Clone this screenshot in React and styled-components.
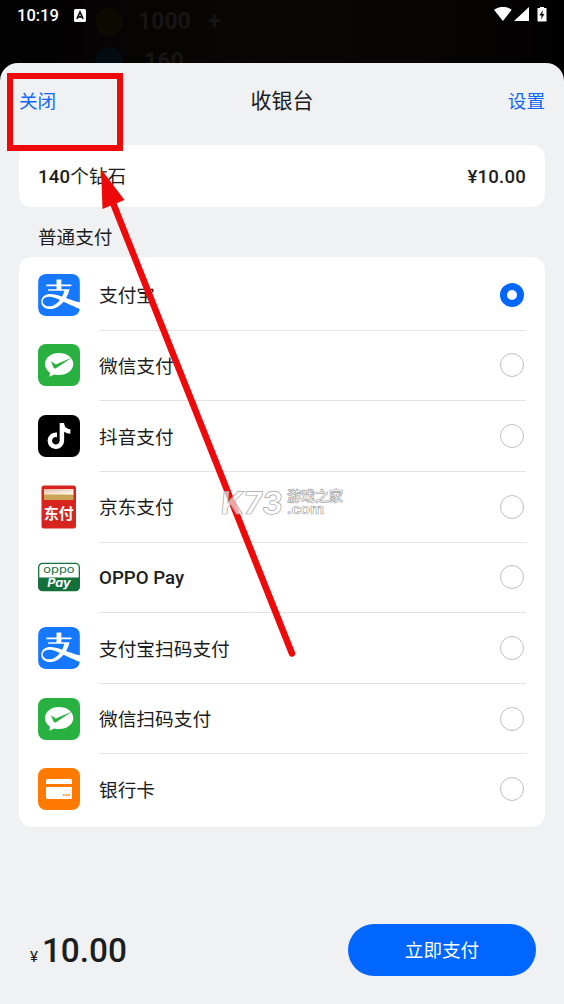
import React, { useState } from 'react';
import styled, { createGlobalStyle } from 'styled-components';
import { SiAlipay } from 'react-icons/si';
import { FaTiktok } from 'react-icons/fa';

const colors = {
  sheet: '#eff1f3',
  white: '#ffffff',
  primary: '#0066ff',
  text: '#1c1d20',
  line: '#e3e3e3',
  mark: '#ee0a0a',
};

const GlobalStyle = createGlobalStyle`
  * {
    box-sizing: border-box;
  }
  body {
    margin: 0;
    background: #040303;
    font-family: Roboto, "Noto Sans CJK SC", sans-serif;
    color: ${colors.text};
  }
`;

const Screen = styled.div`
  position: relative;
  display: flex;
  flex-direction: column;
  width: 564px;
  height: 1004px;
  overflow: hidden;
  background: linear-gradient(90deg, #020202, #0a0605 45%, #080504 75%, #020101);
`;

const TopArea = styled.div`
  position: relative;
  height: 63px;
  flex: none;
  overflow: hidden;
`;

const StatusBar = styled.div`
  position: relative;
  display: flex;
  align-items: center;
  height: 30px;
  padding: 0 16px 0 17px;
  color: ${colors.white};
`;

const Clock = styled.span`
  width: 57px;
  font-size: 16.5px;
  font-weight: 500;
`;

const StatusIcons = styled.svg`
  margin-left: auto;
`;

const Coin = styled.div`
  position: absolute;
  left: ${props => props.$x}px;
  top: ${props => props.$y}px;
  width: 28px;
  height: 28px;
  border-radius: 50%;
  background: ${props => props.$color};
`;

const CoinCount = styled.span`
  position: absolute;
  left: ${props => props.$x}px;
  top: ${props => props.$y}px;
  color: #171514;
  font-size: 23px;
  line-height: 26px;
  font-weight: 700;
`;

const Sheet = styled.div`
  display: flex;
  flex-direction: column;
  flex: 1;
  padding: 0 19px;
  border-radius: 18px 18px 0 0;
  background: ${colors.sheet};
  z-index: 1;
`;

const Header = styled.div`
  display: grid;
  grid-template-columns: 1fr auto 1fr;
  align-items: center;
  height: 82px;
  padding-bottom: 10px;
`;

const HeaderLink = styled.a`
  justify-self: ${props => (props.$end ? 'end' : 'start')};
  color: #1268f3;
  font-size: 18.6px;
`;

const Title = styled.h1`
  margin: 0;
  font-size: 21px;
  font-weight: 400;
`;

const OrderCard = styled.div`
  display: flex;
  align-items: baseline;
  justify-content: space-between;
  height: 62px;
  padding: 2px 19px 0;
  border-radius: 13px;
  background: ${colors.white};
  font-size: 18.6px;
  line-height: 61px;
  font-weight: 500;
  letter-spacing: 0.2px;
`;

const Unit = styled.span`
  font-weight: 400;
  letter-spacing: 0;
`;

const SectionLabel = styled.div`
  height: 50px;
  padding: 2px 0 0 19px;
  font-size: 18.6px;
  line-height: 58px;
`;

const MethodList = styled.div`
  height: 570px;
  padding: 3px 19px 0;
  border-radius: 13px;
  background: ${colors.white};
`;

const MethodRow = styled.div`
  display: flex;
  align-items: center;
  height: 70.65px;
  cursor: pointer;
`;

const IconCell = styled.div`
  display: flex;
  align-items: center;
  justify-content: center;
  width: 42px;
  margin: 0 19px 1px 0;
`;

const IconTile = styled.div`
  display: flex;
  align-items: center;
  justify-content: center;
  width: 42px;
  height: 42px;
  border-radius: 8px;
  overflow: hidden;
  background: ${props => props.$bg};
  color: ${props => props.$fg || colors.white};
`;

const MethodBody = styled.div`
  display: flex;
  align-items: center;
  justify-content: space-between;
  flex: 1;
  height: 100%;
  padding-right: 2px;
  border-bottom: 1px solid ${props => (props.$last ? 'transparent' : colors.line)};
  font-size: 18.7px;
`;

const MethodName = styled.span`
  font-weight: ${props => (props.$latin ? 500 : 400)};
  padding: ${props => (props.$latin ? '2px 0 0' : '0 0 2px')};
`;

const Radio = styled.span`
  width: 24px;
  height: 24px;
  border-radius: 50%;
  border: ${props => (props.$checked ? `7px solid ${colors.primary}` : '1.5px solid #bfbfbf')};
`;

const Footer = styled.div`
  display: flex;
  align-items: center;
  justify-content: space-between;
  margin-top: auto;
  height: 108px;
  padding: 0 9px 0 11px;
`;

const Total = styled.div`
  display: flex;
  align-items: baseline;
  font-size: 33.4px;
  font-weight: 500;
`;

const Currency = styled.span`
  margin-right: 4px;
  font-size: 15px;
  font-weight: 400;
`;

const PayButton = styled.button`
  width: 188px;
  height: 52px;
  padding: 0 0 3px;
  border: none;
  border-radius: 26px;
  background: ${colors.primary};
  color: ${colors.white};
  font-family: inherit;
  font-size: 18.6px;
  cursor: pointer;
`;

const Highlight = styled.div`
  position: absolute;
  left: 7px;
  top: 73px;
  width: 116px;
  height: 78px;
  border: 6px solid ${colors.mark};
  z-index: 2;
`;

const Overlay = styled.svg`
  position: absolute;
  left: 0;
  top: 0;
  pointer-events: none;
  z-index: 2;
`;

function WechatIcon() {
  return (
    <IconTile $bg="#28b140">
      <svg width="42" height="42" viewBox="0 0 42 42">
        <path d="M21 9C13 9 7 13.8 7 20c0 3.700 2 6.700 5 8.700L11.400 32.700L16.200 30.400C17.700 30.800 19.300 31 21 31c8 0 14.300-4.800 14.300-11S29 9 21 9Z" fill="#fff" />
        <path d="M13 17.300L17.800 20.400L34 13.400L18 24.200Q16.300 25.200 15.400 23.200Z" fill="#28b140" />
      </svg>
    </IconTile>
  );
}

function JdIcon() {
  return (
    <svg width="36" height="44" viewBox="0 0 36 44">
      <defs>
        <linearGradient id="jdCard" x1="0" y1="0" x2="0.7" y2="1">
          <stop offset="0" stopColor="#e9b9a0" />
          <stop offset="1" stopColor="#fffaf0" />
        </linearGradient>
      </defs>
      <rect x="0.500" y="0.500" width="34.500" height="43" rx="2.500" fill="#d7241f" />
      <rect x="3" y="4" width="29.500" height="6" fill="url(#jdCard)" />
      <rect x="3" y="9.500" width="29.500" height="5.500" fill="#c9a456" />
      <text x="17.700" y="34" textAnchor="middle" fontSize="15" fontWeight="700" fontFamily="Noto Sans CJK SC, sans-serif" fill="#fff">东付</text>
    </svg>
  );
}

function OppoIcon() {
  return (
    <svg width="43" height="30" viewBox="0 0 43 30">
      <rect x="0.700" y="1" width="41.600" height="28" rx="4" fill="#fff" stroke="#14703b" strokeWidth="1.300" />
      <path d="M0.500 15.500h42v9.500a4 4 0 0 1-4 4h-34a4 4 0 0 1-4-4Z" fill="#14703b" />
      <text x="21.500" y="10.500" textAnchor="middle" fontSize="10.500" textLength="32" lengthAdjust="spacingAndGlyphs" fontFamily="Inter, sans-serif" fontWeight="400" fill="#14703b">oppo</text>
      <text x="21.500" y="25.500" textAnchor="middle" fontSize="11.500" textLength="24" lengthAdjust="spacingAndGlyphs" fontFamily="Inter, sans-serif" fontWeight="700" fontStyle="italic" fill="#fff">Pay</text>
    </svg>
  );
}

function AlipayIcon() {
  return (
    <IconTile $bg="#ffffff" $fg="#1677ff">
      <SiAlipay size={42} />
    </IconTile>
  );
}

function TiktokIcon() {
  return (
    <IconTile $bg="#000000">
      <FaTiktok size={26} />
    </IconTile>
  );
}

function BankIcon() {
  return (
    <IconTile $bg="#ff7a00">
      <svg width="42" height="42" viewBox="0 0 42 42">
        <path d="M9.500 11h23a1.500 1.500 0 0 1 1.500 1.500V16H8v-3.500A1.500 1.500 0 0 1 9.500 11Z" fill="#fff" />
        <path d="M8 19h26v10.500a1.500 1.500 0 0 1-1.500 1.500h-23A1.500 1.500 0 0 1 8 29.500Z" fill="#fff" />
        <path d="M25 27h7" stroke="#ff7a00" strokeWidth="1.300" strokeDasharray="1.600 1" />
      </svg>
    </IconTile>
  );
}

const methods = [
  { id: 'alipay', name: '支付宝', Icon: AlipayIcon },
  { id: 'wechat', name: '微信支付', Icon: WechatIcon },
  { id: 'douyin', name: '抖音支付', Icon: TiktokIcon },
  { id: 'jd', name: '京东支付', Icon: JdIcon },
  { id: 'oppo', name: 'OPPO Pay', Icon: OppoIcon, latin: true },
  { id: 'alipay-scan', name: '支付宝扫码支付', Icon: AlipayIcon },
  { id: 'wechat-scan', name: '微信扫码支付', Icon: WechatIcon },
  { id: 'bank', name: '银行卡', Icon: BankIcon },
];

function App() {
  const [selected, setSelected] = useState('alipay');

  return (
    <Screen>
      <GlobalStyle />
      <TopArea>
        <Coin $x={95} $y={8} $color="#0c0b02" />
        <CoinCount $x={138} $y={9}>1000</CoinCount>
        <CoinCount $x={208} $y={9}>+</CoinCount>
        <Coin $x={95} $y={47} $color="#040b11" />
        <CoinCount $x={144} $y={49}>160</CoinCount>
        <StatusBar>
          <Clock>10:19</Clock>
          <svg width="12" height="13" viewBox="0 0 12 13">
            <rect width="12" height="13" rx="1.500" fill="#fff" />
            <path d="M3 9.800L6 3L9 9.800M4.200 7.800h3.600" fill="none" stroke="#111" strokeWidth="1.700" />
          </svg>
          <StatusIcons width="54" height="16" viewBox="0 0 54 16">
            <path d="M0 2.700Q8.800-3 17.700 2.700L8.900 14Z" fill="#fff" />
            <path d="M35 0v14H20Z" fill="#fff" />
            <path d="M46-0.500h4V1h2.500v13.500h-9V1H46Z" fill="#fff" />
            <path d="M49 3L45.300 8.500h2.300L47 12.500L50.500 7h-2.200Z" fill="#111" />
          </StatusIcons>
        </StatusBar>
      </TopArea>
      <Sheet>
        <Header>
          <HeaderLink>关闭</HeaderLink>
          <Title>收银台</Title>
          <HeaderLink $end>设置</HeaderLink>
        </Header>
        <OrderCard>
          <span>140<Unit>个钻石</Unit></span>
          <span>¥10.00</span>
        </OrderCard>
        <SectionLabel>普通支付</SectionLabel>
        <MethodList>
          {methods.map(({ id, name, Icon, latin }, index) => (
            <MethodRow key={id} onClick={() => setSelected(id)}>
              <IconCell>
                <Icon />
              </IconCell>
              <MethodBody $last={index === methods.length - 1}>
                <MethodName $latin={latin}>{name}</MethodName>
                <Radio $checked={selected === id} />
              </MethodBody>
            </MethodRow>
          ))}
        </MethodList>
        <Footer>
          <Total>
            <Currency>¥</Currency>
            10.00
          </Total>
          <PayButton>立即支付</PayButton>
        </Footer>
      </Sheet>
      <Highlight />
      <Overlay width="564" height="1004" viewBox="0 0 564 1004">
        <path d="M292 653.500L113 203" stroke={colors.mark} strokeWidth="6.500" strokeLinecap="round" />
        <path d="M101 169L124.500 200L102.500 209Z" fill={colors.mark} />
        <g fill="#fff" fillOpacity="0.65" stroke="#a8a8a8" strokeWidth="0.700">
          <text transform="translate(220 513.500) skewX(-5)" fontSize="31" fontWeight="700" fontFamily="Inter, sans-serif" textLength="62" lengthAdjust="spacingAndGlyphs">K73</text>
          <text x="287" y="501" fontSize="14" fontWeight="700" fontFamily="Noto Sans CJK SC, sans-serif">游戏之家</text>
          <text x="287" y="514" fontSize="15.500" fontWeight="700" fontFamily="Liberation Sans, sans-serif" textLength="37" lengthAdjust="spacingAndGlyphs">.com</text>
        </g>
      </Overlay>
    </Screen>
  );
}

export default App;
